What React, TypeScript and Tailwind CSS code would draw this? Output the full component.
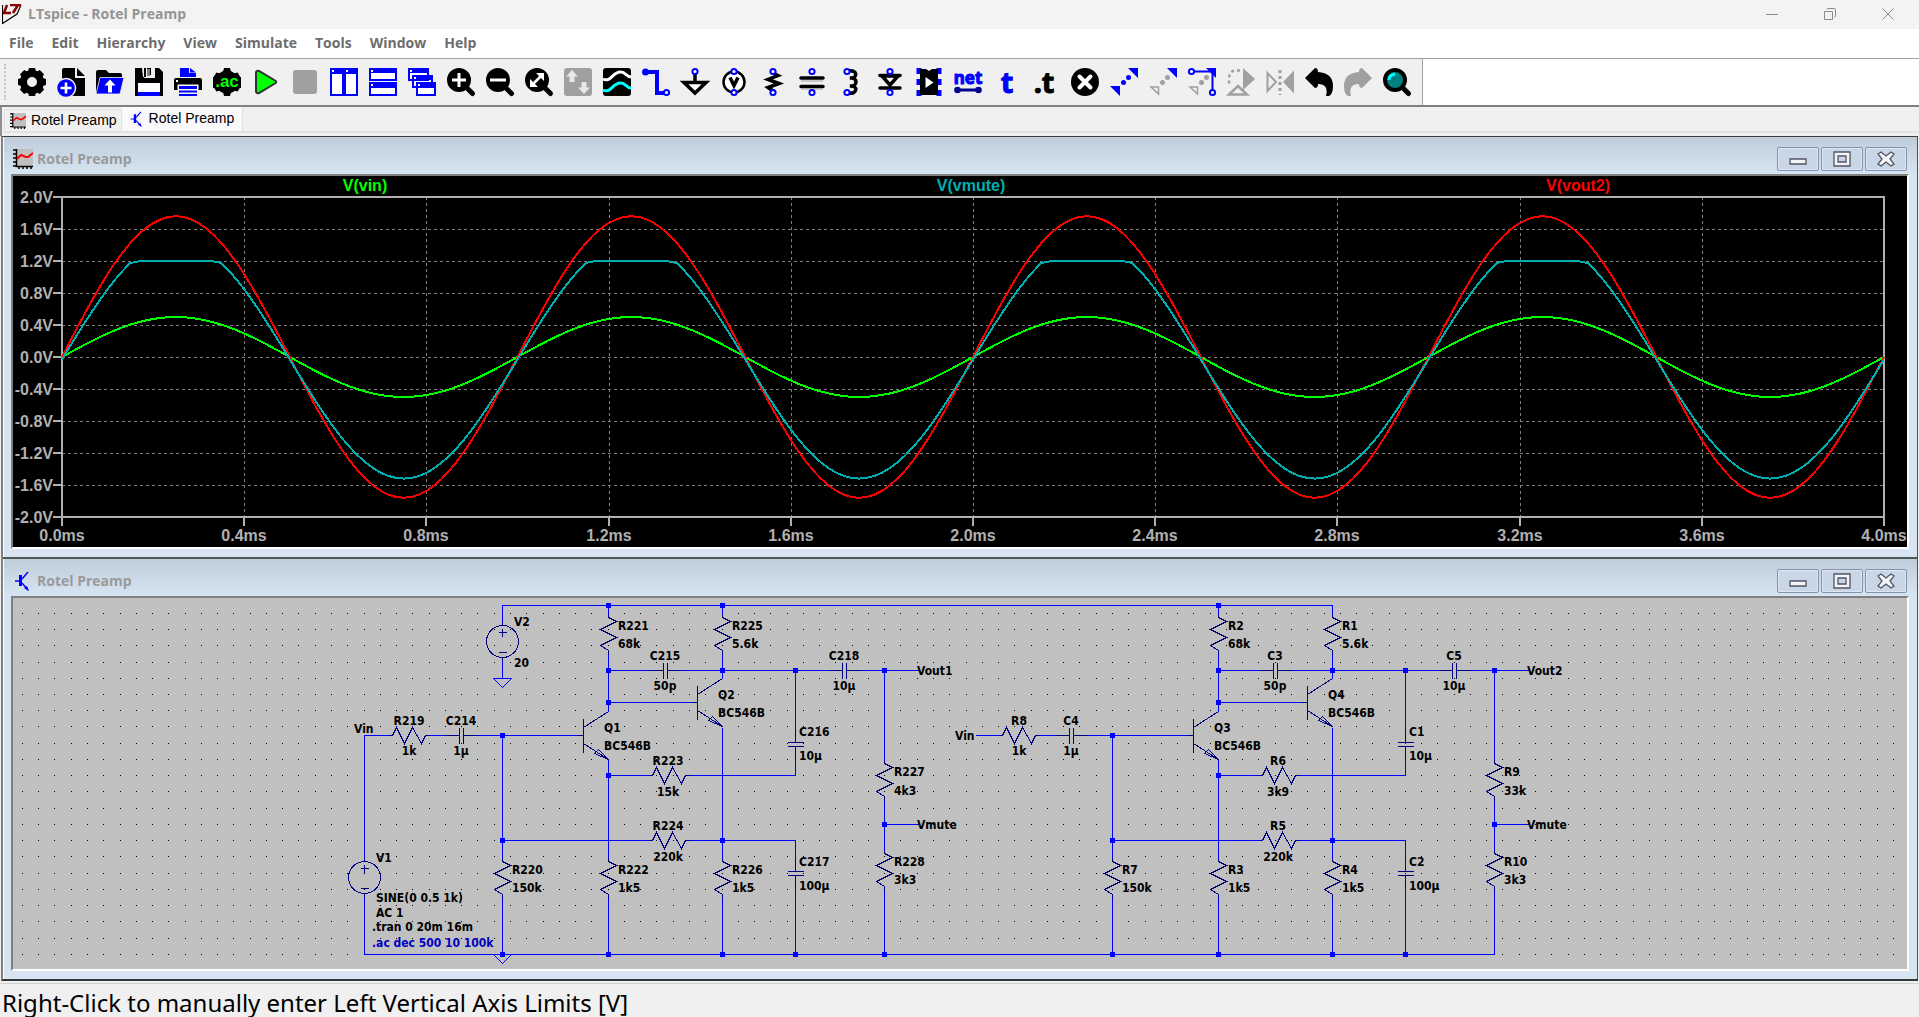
import type { ReactNode } from "react";

const BLUE = "#0000ff";
const GRAY = "#a0a0a0";

const menus = ["File", "Edit", "Hierarchy", "View", "Simulate", "Tools", "Window", "Help"];

/* ---------- toolbar icons, all on a 28 x 28 box ---------- */

function Pin({ x, y }: { x: number; y: number }) {
  return <circle cx={x} cy={y} r="2.6" fill="#fff" stroke={BLUE} strokeWidth="2" />;
}

function Lens({ children, fill = "#000" }: { children?: ReactNode; fill?: string }) {
  return (
    <>
      <path d="M17 17l8.500 8.500" stroke="#000" strokeWidth="5" strokeLinecap="round" />
      <circle cx="12" cy="12" r="10" fill={fill} stroke="#000" strokeWidth="4" />
      {children}
    </>
  );
}

const dots = (color: string) => (
  <>
    <circle cx="13.500" cy="14.500" r="2.500" fill={color} />
    <circle cx="18.500" cy="9.500" r="2.500" fill={color} />
  </>
);

const tools: { label: string; icon: ReactNode }[] = [
  {
    label: "Settings",
    icon: (
      <>
        <circle cx="14" cy="14" r="8.500" fill="none" stroke="#000" strokeWidth="7" />
        {[0, 45, 90, 135, 180, 225, 270, 315].map((a) => (
          <path key={a} d="M10 3.500L11 0H17L18 3.500z" transform={`rotate(${a} 14 14)`} />
        ))}
      </>
    ),
  },
  {
    label: "New Schematic",
    icon: (
      <>
        <path d="M7 0H18V10H28V28H5V2q0-2 2-2z" />
        <path d="M20 0L28 8H20z" />
        <circle cx="9" cy="20" r="9.500" fill={BLUE} stroke="#f0f0f0" strokeWidth="1.500" />
        <path d="M9 14.500v11M3.500 20h11" stroke="#fff" strokeWidth="2.600" />
      </>
    ),
  },
  {
    label: "Open",
    icon: (
      <>
        <path d="M0 26V4q0-2 2-2H10l3 3H24q2 0 2 2v3H5z" />
        <path d="M4 9.500H28L24 26H0z" fill={BLUE} stroke="#f0f0f0" strokeWidth="0.800" />
        <path d="M14 11.500l5.500 6h-3.500v7h-4v-7h-3.500z" fill="#fff" />
      </>
    ),
  },
  {
    label: "Save",
    icon: (
      <>
        <path d="M0 0H24L28 4V28H0z" />
        <path d="M7 0H9V10H20V0H16V7H12V0H11V9H8z" fill="#f0f0f0" />
        <path d="M12 1h3v7h-3z" fill="#808080" />
        <path d="M3 15H25V24H3z" fill="#fff" />
        <path d="M3 24H25V28H3z" fill={BLUE} />
      </>
    ),
  },
  {
    label: "Print",
    icon: (
      <>
        <path d="M6 0h9v5h7v4H6zM16 0l6 4.500h-6z" fill={BLUE} />
        <path d="M2 10H26q2 0 2 2V22H0V12q0-2 2-2z" />
        <path d="M2 12h2v2H2z" fill="#fff" />
        <path d="M3.500 16.500h21v6h-21z" fill="#fff" />
        <path d="M5 18h18v3H5zM5 22.500h18v2H5zM5 26h18v2H5z" fill={BLUE} />
      </>
    ),
  },
  {
    label: "Configure Analysis",
    icon: (
      <>
        <circle cx="14" cy="14" r="11.500" />
        {[0, 60, 120, 180, 240, 300].map((a) => (
          <path key={a} d="M10 4L11 0H17L18 4z" transform={`rotate(${a} 14 14)`} />
        ))}
        <path d="M0 9H28V20H0z" />
        <text x="14" y="19" textAnchor="middle" fontSize="17" fontWeight="700" fill="#00ff00" fontFamily="Liberation Sans, sans-serif">
          .ac
        </text>
      </>
    ),
  },
  {
    label: "Run",
    icon: <path d="M4 5q0-3 3-2L23 12.500q2.500 1.500 0 3L7 25q-3 1-3-2z" fill="#00ff00" stroke="#303030" strokeWidth="2" />,
  },
  { label: "Stop", icon: <rect x="2" y="2" width="24" height="24" rx="3" fill={GRAY} /> },
  {
    label: "Tile Vertically",
    icon: (
      <>
        <path d="M1 1H13V27H1zM15 1H27V27H15z" fill="#fff" stroke={BLUE} strokeWidth="2" />
        <path d="M0 0h28v6H0z" fill={BLUE} />
        <path d="M2 2h2v2H2zM16 2h2v2h-2z" fill="#fff" />
      </>
    ),
  },
  {
    label: "Tile Horizontally",
    icon: (
      <>
        <path d="M1 1H27V12H1zM1 15H27V27H1z" fill="#fff" stroke={BLUE} strokeWidth="2" />
        <path d="M0 0h28v5H0zM0 14h28v6H0z" fill={BLUE} />
        <path d="M2 2h2v2H2zM2 16h2v2H2z" fill="#fff" />
      </>
    ),
  },
  {
    label: "Cascade",
    icon: (
      <>
        <path d="M1 1H20V12H1zM5 8H24V19H5zM9 15H27V27H9z" fill="#fff" stroke={BLUE} strokeWidth="2" />
        <path d="M0 0h21v5H0zM4 7h21v5H4zM8 14h20v6H8z" fill={BLUE} />
        <path d="M2 2h2v2H2zM6 9h2v2H6zM10 16h2v2h-2z" fill="#fff" />
      </>
    ),
  },
  {
    label: "Zoom In",
    icon: (
      <Lens>
        <path d="M12 5v14M5 12h14" stroke="#fff" strokeWidth="3" />
      </Lens>
    ),
  },
  {
    label: "Zoom Out",
    icon: (
      <Lens>
        <path d="M4 12h16" stroke="#fff" strokeWidth="3" />
      </Lens>
    ),
  },
  {
    label: "Zoom to Fit",
    icon: (
      <Lens>
        <path d="M11 5h8v8zM5 11v8h8z" fill="#fff" />
        <path d="M7.500 16.500l9-9" stroke="#fff" strokeWidth="2.500" />
      </Lens>
    ),
  },
  {
    label: "Autorange Y-axis",
    icon: (
      <>
        <rect width="28" height="28" rx="3" fill={GRAY} />
        <path d="M8 2l6 6.500h-3.500V14h-5V8.500H2zM20 26l6-6.500h-3.500V14h-5v5.500H14z" fill="#e8e8e8" />
      </>
    ),
  },
  {
    label: "Pick Visible Traces",
    icon: (
      <>
        <rect width="28" height="28" rx="3" />
        <path d="M0 11C8 15 10 3 18 4C23 4 23 9 28 9" fill="none" stroke="#fff" strokeWidth="3" />
        <path d="M0 22C8 26 10 14 18 15C23 15 23 20 28 20" fill="none" stroke="#00ffff" strokeWidth="3" />
      </>
    ),
  },
  {
    label: "Wire",
    icon: (
      <>
        <path d="M3 4H15V25H24" fill="none" stroke={BLUE} strokeWidth="4" />
        <circle cx="3.500" cy="4" r="3.500" fill={BLUE} />
        <Pin x={24.5} y={24.5} />
      </>
    ),
  },
  {
    label: "Ground",
    icon: (
      <>
        <path d="M14 5v9M3 14.500H25L14 25z" fill="#fff" stroke="#000" strokeWidth="3.500" />
        <Pin x={14} y={3.5} />
      </>
    ),
  },
  {
    label: "Voltage Source",
    icon: (
      <>
        <circle cx="14" cy="14" r="10.500" fill="#fff" stroke="#000" strokeWidth="2.500" />
        <path d="M10 9.500l4 8 4-8" fill="none" stroke="#000" strokeWidth="3.500" />
        <Pin x={14} y={3.5} />
        <Pin x={14} y={24.5} />
      </>
    ),
  },
  {
    label: "Resistor",
    icon: (
      <>
        <path d="M14 5l5 2.500-10 4 11 4-11 4 6 4" fill="none" stroke="#000" strokeWidth="3.500" />
        <Pin x={14} y={3.5} />
        <Pin x={14} y={24.5} />
      </>
    ),
  },
  {
    label: "Capacitor",
    icon: (
      <>
        <path d="M3 10H25M3 18.500H25" stroke="#000" strokeWidth="3.500" strokeLinecap="round" />
        <path d="M3 13H25M3 21H25" stroke={GRAY} />
        <Pin x={14} y={3.5} />
        <Pin x={14} y={24.5} />
      </>
    ),
  },
  {
    label: "Inductor",
    icon: (
      <>
        <path d="M11 3C21 1 21 11 13 10C21 9 21 19 13 18C21 17 21 27 11 25" fill="none" stroke="#000" strokeWidth="3.500" />
        <Pin x={10} y={3.5} />
        <Pin x={10} y={24.5} />
      </>
    ),
  },
  {
    label: "Diode",
    icon: (
      <>
        <path d="M6 8H22L14 17z" fill="#fff" stroke="#000" strokeWidth="3.500" />
        <path d="M4 7.500H24M4 20H24" stroke="#000" strokeWidth="3.500" strokeLinecap="round" />
        <Pin x={14} y={3.5} />
        <Pin x={14} y={24.5} />
      </>
    ),
  },
  {
    label: "Component",
    icon: (
      <>
        <path d="M4 0v6M4 11v6M4 22v6M24 0v6M24 11v6M24 22v6" stroke={BLUE} strokeWidth="5" />
        <path d="M5 1h6l3 2 3-2h6v26H5z" />
        <path d="M10.500 9l8 5.500-8 5.500z" fill="#fff" />
      </>
    ),
  },
  {
    label: "Label Net",
    icon: (
      <>
        <text x="14" y="16" textAnchor="middle" fontSize="17" fontWeight="700" fill={BLUE} stroke={BLUE} strokeWidth="1" fontFamily="Noto Sans, sans-serif">
          net
        </text>
        <path d="M3 22H25" stroke="#000090" strokeWidth="3" />
        <circle cx="3.500" cy="22" r="3.300" fill="#000090" />
        <circle cx="24.500" cy="22" r="3.300" fill="#000090" />
      </>
    ),
  },
  {
    label: "Text",
    icon: (
      <text x="14" y="25" textAnchor="middle" fontSize="29" fontWeight="700" fill={BLUE} stroke={BLUE} strokeWidth="1" fontFamily="Noto Sans, sans-serif">
        t
      </text>
    ),
  },
  {
    label: "SPICE Directive",
    icon: (
      <text x="12" y="25" textAnchor="middle" fontSize="29" fontWeight="700" stroke="#000" strokeWidth="1" fontFamily="Noto Sans, sans-serif">
        .t
      </text>
    ),
  },
  {
    label: "Delete",
    icon: (
      <>
        <circle cx="14" cy="14" r="14" />
        <path d="M8.500 8.500l11 11M19.500 8.500l-11 11" stroke="#fff" strokeWidth="4" strokeLinecap="round" />
      </>
    ),
  },
  {
    label: "Duplicate",
    icon: (
      <>
        <path d="M18 0H28V10zM0 18H10V28z" fill={BLUE} />
        {dots(BLUE)}
      </>
    ),
  },
  {
    label: "Move",
    icon: (
      <>
        <path d="M18 0H28V10z" fill={BLUE} />
        <path d="M2 19H9.500V26z" fill="#f0f0f0" stroke={GRAY} strokeWidth="1.500" />
        {dots(GRAY)}
      </>
    ),
  },
  {
    label: "Drag",
    icon: (
      <>
        <path d="M18 0H28V10z" fill={BLUE} />
        <path d="M2 19H9.500V26z" fill="#f0f0f0" stroke={GRAY} strokeWidth="1.500" />
        {dots(GRAY)}
        <path d="M4 3.500H24.500V24" fill="none" stroke={BLUE} strokeWidth="2" />
        <Pin x={3.5} y={3.5} />
        <Pin x={24.5} y={24.5} />
      </>
    ),
  },
  {
    label: "Rotate",
    icon: (
      <>
        <path d="M16 0l12 11-12 11z" fill={GRAY} />
        <path d="M2 26.500L11 18l9 8.500z" fill="#f0f0f0" stroke={GRAY} strokeWidth="2.500" />
        <path d="M13 2.500H7q-5 2-5 8v6" fill="none" stroke={GRAY} strokeWidth="2.500" strokeDasharray="3 3" />
      </>
    ),
  },
  {
    label: "Mirror",
    icon: (
      <>
        <path d="M14 2v25" stroke={GRAY} strokeWidth="3" strokeDasharray="3 3" />
        <path d="M1.500 5L10 14l-8.500 9z" fill="#f0f0f0" stroke={GRAY} strokeWidth="2" />
        <path d="M28 2.500V25.500L17 14z" fill={GRAY} />
      </>
    ),
  },
  {
    label: "Undo",
    icon: <path d="M0 10L10 0q3 0 3 4Q28 5 28 18q0 8-4 10h-3q3-12-8-12 0 4-3 4z" />,
  },
  {
    label: "Redo",
    icon: <path d="M28 10L18 0q-3 0-3 4Q0 5 0 18q0 8 4 10h3q-3-12 8-12 0 4 3 4z" fill={GRAY} />,
  },
  {
    label: "Search",
    icon: (
      <Lens fill="#008080">
        <path d="M6 12q0-5 6-6" fill="none" stroke="#00ffff" strokeWidth="3" />
      </Lens>
    ),
  },
];

function PlotIcon({ className }: { className: string }) {
  return (
    <svg viewBox="0 0 20 20" className={className} aria-hidden="true">
      <path d="M4 0H20V17H4z" fill="#c0c0c0" />
      <path d="M3.500 0V17.500H20M0 1h3M0 5h3M0 9h3M0 13h3M0 17h3M6 17v3M10 17v3M14 17v3M18 17v3" fill="none" stroke="#000" strokeWidth="1.500" />
      <path d="M4 10L8 6l5 2h2l5-4" fill="none" stroke="#ff0000" strokeWidth="2" />
    </svg>
  );
}

function SchematicIcon({ className }: { className: string }) {
  return (
    <svg viewBox="0 0 20 20" className={className} aria-hidden="true">
      <path d="M2 10H7M9 8l6-7M9 12l6 7" fill="none" stroke={BLUE} strokeWidth="1.400" />
      <path d="M6 4h3v11H6zM16 20l-5-3 3-2z" fill={BLUE} />
    </svg>
  );
}

/* ---------- waveform viewer ---------- */

const PLOT = { left: 62, right: 1884, top: 197, bottom: 517, zero: 357 };
const xTicks = ["0.0ms", "0.4ms", "0.8ms", "1.2ms", "1.6ms", "2.0ms", "2.4ms", "2.8ms", "3.2ms", "3.6ms", "4.0ms"];
const yTicks = ["2.0V", "1.6V", "1.2V", "0.8V", "0.4V", "0.0V", "-0.4V", "-0.8V", "-1.2V", "-1.6V", "-2.0V"];
const xAt = (i: number) => Math.round(PLOT.left + (i * (PLOT.right - PLOT.left)) / 10);

function trace(fn: (s: number) => number) {
  const steps = 240;
  return Array.from({ length: steps + 1 }, (_, i) => {
    const x = PLOT.left + (i * (PLOT.right - PLOT.left)) / steps;
    const v = fn(Math.sin((i / steps) * 8 * Math.PI));
    return `${x.toFixed(1)},${(PLOT.zero - v * 80).toFixed(1)}`;
  }).join(" ");
}

const traces = [
  { name: "V(vin)", x: 365, color: "#00ff00", points: trace((s) => 0.5 * s) },
  { name: "V(vout2)", x: 1578, color: "#ff0000", points: trace((s) => 1.76 * s) },
  {
    name: "V(vmute)",
    x: 971,
    color: "#00b0b0",
    points: trace((s) => {
      const v = 1.49 * s - 0.03;
      return v > 1.19 ? 1.19 + (v - 1.19) * 0.05 : v;
    }),
  },
];

function Waveforms() {
  return (
    <svg viewBox="13 176 1894 371" className="block h-auto w-full bg-black" fontFamily="Liberation Sans, Arial, sans-serif" fontSize="16" fontWeight="700">
      <g stroke="#808080" strokeDasharray="3 3" shapeRendering="crispEdges">
        {xTicks.slice(1, 10).map((t, i) => (
          <line key={t} x1={xAt(i + 1) + 0.5} x2={xAt(i + 1) + 0.5} y1={PLOT.top} y2={PLOT.bottom} />
        ))}
        {yTicks.slice(1, 10).map((t, i) => (
          <line key={t} x1={PLOT.left} x2={PLOT.right} y1={PLOT.top + 32.5 + i * 32} y2={PLOT.top + 32.5 + i * 32} />
        ))}
      </g>
      <g stroke="#b0b0b0" strokeWidth="2" shapeRendering="crispEdges" fill="none">
        <rect x={PLOT.left} y={PLOT.top} width={PLOT.right - PLOT.left} height={PLOT.bottom - PLOT.top} />
        {xTicks.map((t, i) => (
          <line key={t} x1={xAt(i)} x2={xAt(i)} y1={PLOT.bottom} y2={PLOT.bottom + 9} />
        ))}
        {yTicks.map((t, i) => (
          <line key={t} x1={PLOT.left - 9} x2={PLOT.left} y1={PLOT.top + i * 32} y2={PLOT.top + i * 32} />
        ))}
      </g>
      <g fill="#b0b0b0">
        {xTicks.map((t, i) => (
          <text key={t} x={xAt(i)} y="541" textAnchor="middle">
            {t}
          </text>
        ))}
        {yTicks.map((t, i) => (
          <text key={t} x="53" y={203 + i * 32} textAnchor="end">
            {t}
          </text>
        ))}
      </g>
      {traces.map((t) => (
        <g key={t.name}>
          <polyline points={t.points} fill="none" stroke={t.color} strokeWidth="2" shapeRendering="crispEdges" />
          <text x={t.x} y="191" textAnchor="middle" fill={t.color}>
            {t.name}
          </text>
        </g>
      ))}
    </svg>
  );
}

/* ---------- schematic ---------- */

const NAVY = "#000080";

const gridDots = Array.from({ length: 22 }, (_, row) =>
  Array.from({ length: 116 }, (_, col) => `M${Math.floor(22.4 + col * 16.27)} ${Math.floor(613.3 + row * 16.24)}h1v1h-1z`).join("")
).join("");

const wires = [
  "M608 605V617M608 650V711M608 759V861M608 894V954",
  "M722 605V617M722 650V678M722 727V861M722 894V954",
  "M608 670H663M667 670H842M846 670H918M608 702H697",
  "M425 735H459M463 735H583M502 735V861M502 894V954",
  "M608 775H652M685 775H795V746M795 742V670",
  "M502 840H652M685 840H795V871M795 875V954",
  "M884 670V763M884 797V853M884 886V954M884 824H918",
].join("");

const joints = [
  [608, 605], [608, 670], [722, 670], [795, 670], [884, 670], [608, 702], [502, 735],
  [608, 775], [502, 840], [722, 840], [884, 824], [502, 954], [608, 954], [722, 954], [795, 954],
];

const parts = [
  { kind: "r", x: 608, y: 617 },
  { kind: "r", x: 722, y: 617 },
  { kind: "r", x: 502, y: 861 },
  { kind: "r", x: 608, y: 861 },
  { kind: "r", x: 722, y: 861 },
  { kind: "r", x: 884, y: 763 },
  { kind: "r", x: 884, y: 853 },
  { kind: "rh", x: 392, y: 735 },
  { kind: "rh", x: 652, y: 775 },
  { kind: "rh", x: 652, y: 840 },
  { kind: "ch", x: 459, y: 735 },
  { kind: "ch", x: 663, y: 670 },
  { kind: "ch", x: 842, y: 670 },
  { kind: "c", x: 795, y: 742 },
  { kind: "c", x: 795, y: 871 },
  { kind: "q", x: 583, y: 735 },
  { kind: "q", x: 697, y: 702 },
];

const shapes: Record<string, string> = {
  r: "M0-4V0L8 4L-8 12L8 20L-8 28L0 33V37",
  rh: "M-4 0H0L4-8L12 8L20-8L29 8L33 0H37",
  ch: "M0-8V8M4-8V8M-14 0H0M4 0H18",
  c: "M-8 0H8M-8 4H8M0-14V0M0 4V18",
  q: "M-7 0H0M0-17V17M0-8L25-24M0 8L25 24L15 14L11 18L25 24",
};

// x, y, anchor, and the text in the left and the right channel
const labels: [number, number, "start" | "middle", string, string][] = [
  [618, 630, "start", "R221", "R2"],
  [618, 648, "start", "68k", "68k"],
  [732, 630, "start", "R225", "R1"],
  [732, 648, "start", "5.6k", "5.6k"],
  [665, 660, "middle", "C215", "C3"],
  [665, 690, "middle", "50p", "50p"],
  [844, 660, "middle", "C218", "C5"],
  [844, 690, "middle", "10µ", "10µ"],
  [917, 675, "start", "Vout1", "Vout2"],
  [718, 699, "start", "Q2", "Q4"],
  [718, 717, "start", "BC546B", "BC546B"],
  [604, 732, "start", "Q1", "Q3"],
  [604, 750, "start", "BC546B", "BC546B"],
  [409, 725, "middle", "R219", "R8"],
  [409, 755, "middle", "1k", "1k"],
  [461, 725, "middle", "C214", "C4"],
  [461, 755, "middle", "1µ", "1µ"],
  [799, 736, "start", "C216", "C1"],
  [799, 760, "start", "10µ", "10µ"],
  [668, 765, "middle", "R223", "R6"],
  [668, 796, "middle", "15k", "3k9"],
  [894, 776, "start", "R227", "R9"],
  [894, 795, "start", "4k3", "33k"],
  [917, 829, "start", "Vmute", "Vmute"],
  [668, 830, "middle", "R224", "R5"],
  [668, 861, "middle", "220k", "220k"],
  [512, 874, "start", "R220", "R7"],
  [512, 892, "start", "150k", "150k"],
  [618, 874, "start", "R222", "R3"],
  [618, 892, "start", "1k5", "1k5"],
  [732, 874, "start", "R226", "R4"],
  [732, 892, "start", "1k5", "1k5"],
  [799, 866, "start", "C217", "C2"],
  [799, 890, "start", "100µ", "100µ"],
  [894, 866, "start", "R228", "R10"],
  [894, 884, "start", "3k3", "3k3"],
];

function Channel({ offset, side }: { offset: number; side: 3 | 4 }) {
  return (
    <g transform={`translate(${offset} 0)`}>
      <g transform="translate(0.5 0.5)" fill="none" shapeRendering="crispEdges">
        <path d={wires} stroke={BLUE} />
        {parts.map((p) => (
          <path key={`${p.x}-${p.y}`} d={shapes[p.kind]} transform={`translate(${p.x} ${p.y})`} stroke={NAVY} />
        ))}
      </g>
      {joints.map(([x, y]) => (
        <rect key={`${x}-${y}`} x={x - 2} y={y - 2} width="5" height="5" fill={BLUE} />
      ))}
      {labels.map((l) => (
        <text key={`${l[0]}-${l[1]}`} x={l[0]} y={l[1]} textAnchor={l[2]}>
          {l[side]}
        </text>
      ))}
    </g>
  );
}

function Source({ x, y }: { x: number; y: number }) {
  return (
    <path
      d="M-16 0a16 16 0 1 0 32 0a16 16 0 1 0-32 0M-4-9H4M0-13V-5M-4 11H4M0-20V-16M0 16V20"
      transform={`translate(${x + 0.5} ${y + 0.5})`}
      fill="none"
      stroke={NAVY}
      shapeRendering="crispEdges"
    />
  );
}

function Schematic() {
  return (
    <svg
      viewBox="13 598 1894 371"
      className="block h-auto w-full bg-[#c0c0c0]"
      fontFamily="DejaVu Sans Condensed, Noto Sans, sans-serif"
      fontSize="12"
      fontWeight="700"
    >
      <path d={gridDots} shapeRendering="crispEdges" />
      <g transform="translate(0.5 0.5)" fill="none" stroke={BLUE} shapeRendering="crispEdges">
        <path d="M502 621V605H1332M502 661V678M493 678H511L502 687zM493 954L502 963L511 954" />
        <path d="M388 735H364V857M364 897V954H1494M975 735H998" />
      </g>
      <Channel offset={0} side={3} />
      <Channel offset={610} side={4} />
      <rect x="720" y="603" width="5" height="5" fill={BLUE} />
      <rect x="882" y="952" width="5" height="5" fill={BLUE} />
      <Source x={502} y={641} />
      <Source x={364} y={877} />
      <text x="514" y="626">V2</text>
      <text x="514" y="667">20</text>
      <text x="354" y="733">Vin</text>
      <text x="955" y="740">Vin</text>
      <text x="376" y="862">V1</text>
      <text x="376" y="902">SINE(0 0.5 1k)</text>
      <text x="376" y="917">AC 1</text>
      <text x="372" y="931">.tran 0 20m 16m</text>
      <text x="372" y="947" fill="#0000c0">.ac dec 500 10 100k</text>
    </svg>
  );
}

/* ---------- window chrome ---------- */

const childButtons = [
  { label: "Minimize", d: "M6 9H22V14H6z" },
  { label: "Maximize", d: "M6 2H22V16H6zM10 6V12H18V6z" },
  { label: "Close", d: "M6 4L9 2L14 6L19 2L22 4L18 9L22 14L19 16L14 12L9 16L6 14L10 9z" },
];

function ChildWindow({ icon, children }: { icon: ReactNode; children: ReactNode }) {
  return (
    <section className="border-l border-r border-l-white border-r-[#505050] bg-[#d7e4f2] pr-2 pb-2 pl-[7px]">
      <header className="-mr-2 -ml-[7px] flex h-[37px] items-end bg-linear-to-b from-[#bfcddb] to-[#d7e4f2] pr-[10px] pb-[3px] pl-[9px]">
        <span className="pb-[2px]">{icon}</span>
        <h2 className="ml-1 flex-1 text-[14px] leading-6 font-bold text-[#999999]">Rotel Preamp</h2>
        <div className="flex gap-[2px]">
          {childButtons.map((b) => (
            <button
              key={b.label}
              type="button"
              aria-label={b.label}
              className="flex h-6 w-[42px] items-center justify-center rounded-[2px] border border-[#8492ae] bg-[#c8d6e6] shadow-[inset_0_0_0_1px_#dbe6f2]"
            >
              <svg viewBox="0 0 28 18" className="h-[18px] w-7" aria-hidden="true">
                <path d={b.d} fill="#f4f4f4" fillRule="evenodd" stroke="#505468" strokeWidth="1.300" />
              </svg>
            </button>
          ))}
        </div>
      </header>
      <div className="border-2 border-t-[#808080] border-r-white border-b-white border-l-[#808080]">{children}</div>
    </section>
  );
}

const windowButtons = [
  { label: "Minimize", d: "M0 6.500H12" },
  { label: "Restore", d: "M0.500 3.500H8.500V11.500H0.500zM3 1.500Q3 0.500 4 0.500H10q1.500 0 1.500 1.500V8q0 1-1 1" },
  { label: "Close", d: "M0.500 0.500L11.500 11.500M11.500 0.500L0.500 11.500" },
];

export default function App() {
  return (
    <div className="flex min-h-screen w-full flex-col bg-[#f0f0f0] font-['Open_Sans','Noto_Sans',sans-serif] text-black">
      <header className="flex h-[29px] items-center bg-[#f3f3f3] pr-[2px] pb-px pl-[2px]">
        <svg viewBox="0 0 20 20" className="h-5 w-5" aria-hidden="true">
          <path d="M0.500 1V19.500L15 10L19 1" fill="none" stroke="#000" strokeWidth="1.200" />
          <path d="M5 1L2 9H9M8 1H19M16 1L11 9" fill="none" stroke="#8b0000" strokeWidth="2.500" />
        </svg>
        <h1 className="ml-[6px] flex-1 text-[14px] leading-6 font-bold text-[#949494]">LTspice - Rotel Preamp</h1>
        {windowButtons.map((b) => (
          <button key={b.label} type="button" aria-label={b.label} className="flex h-full w-[58px] items-center justify-center">
            <svg viewBox="0 0 12 12" className="h-3 w-3" aria-hidden="true">
              <path d={b.d} fill="none" stroke="#8c8c8c" />
            </svg>
          </button>
        ))}
      </header>

      <nav className="flex h-[30px] items-center border-b border-[#a0a0a0] bg-white pb-px">
        {menus.map((m) => (
          <button key={m} type="button" className="px-[9px] text-[14px] leading-6 font-bold text-[#6d6d6d]">
            {m}
          </button>
        ))}
      </nav>

      <div className="flex h-12 border-b-2 border-[#808080] bg-white">
        <div className="flex items-center border-r border-[#a0a0a0] bg-[#f0f0f0] pr-[6px] pl-1">
          <div className="mr-[6px] h-9 border-l-2 border-dotted border-[#c4c4c4]" />
          {tools.map((t) => (
            <button key={t.label} type="button" title={t.label} aria-label={t.label} className="flex h-full w-[39px] items-center justify-center">
              <svg viewBox="0 0 28 28" className="h-7 w-7 overflow-visible" aria-hidden="true">
                {t.icon}
              </svg>
            </button>
          ))}
        </div>
      </div>

      <div className="flex h-[29px] items-start border-l-2 border-[#909090] pl-[2px] font-['Liberation_Sans',Arial,sans-serif] text-[14px]">
        <div role="tablist" className="flex h-[26px] flex-1 items-end border-b-2 border-[#e2e2e2]">
          <button type="button" role="tab" aria-selected="false" className="flex h-[22px] items-center gap-[5px] border border-b-0 border-[#e2e2e2] pr-1 pl-[5px]">
            <PlotIcon className="h-4 w-4" />
            Rotel Preamp
          </button>
          <button type="button" role="tab" aria-selected="true" className="flex h-6 items-center gap-1 border-r border-[#e2e2e2] bg-[#f9f9f9] pr-2 pb-px pl-[7px]">
            <SchematicIcon className="h-4 w-4" />
            Rotel Preamp
          </button>
        </div>
      </div>

      <main className="mr-px ml-px border-t border-b-2 border-l-2 border-t-[#404040] border-b-[#303838] border-l-[#808080]">
        <ChildWindow icon={<PlotIcon className="h-5 w-5" />}>
          <Waveforms />
        </ChildWindow>
        <div className="h-[2px] bg-[#505858]" />
        <ChildWindow icon={<SchematicIcon className="h-5 w-5" />}>
          <Schematic />
        </ChildWindow>
      </main>

      <footer className="mt-[2px] flex flex-1 items-end border-t border-[#d0d0d0] pl-[2px]">
        <p className="font-['Noto_Sans','Open_Sans',sans-serif] text-[24px] leading-7">
          Right-Click to manually enter Left Vertical Axis Limits [V]
        </p>
      </footer>
    </div>
  );
}
